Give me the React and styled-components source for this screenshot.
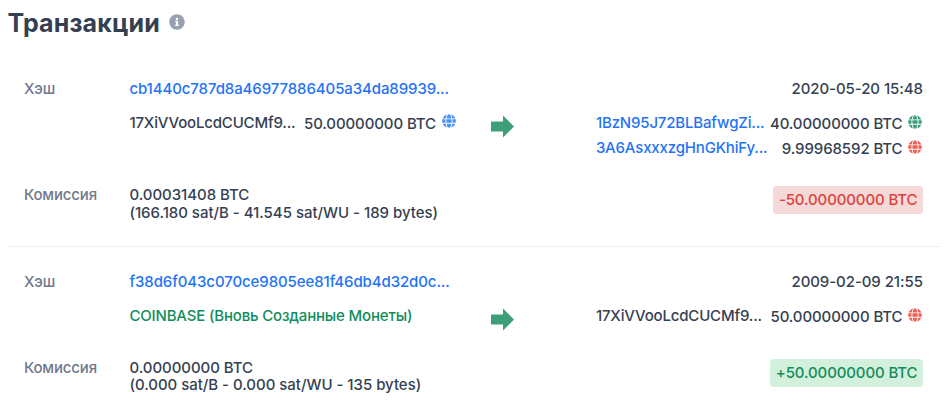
import React from 'react';
import styled, { createGlobalStyle } from 'styled-components';
import { FaGlobe, FaInfoCircle } from 'react-icons/fa';

const GlobalStyle = createGlobalStyle`
  * { box-sizing: border-box; }
  body {
    margin: 0;
    background: #fff;
    color: #353f52;
    font: 500 15px/18px Inter, sans-serif;
  }
`;

const tones = { blue: '#1f74f5', globe: '#4a91f7', green: '#118d5b', leaf: '#3c9f79', red: '#ec6055', dark: '#353f52' };

const Page = styled.main`
  width: 945px;
  height: 418px;
  padding: 8px 5px 0 7.5px;
  overflow: hidden;
`;

const Header = styled.header`
  display: flex;
  align-items: center;
  gap: 9px;
  height: 29px;
`;

const Title = styled.h1`
  margin: 0;
  width: 152px;
  padding-top: 1px;
  font-size: 25px;
  line-height: 30px;
  font-weight: 700;
  letter-spacing: 0.15px;
`;

const InfoIcon = styled(FaInfoCircle)`
  width: 16px;
  height: 16px;
  margin-bottom: 1px;
  color: #98a1b2;
`;

const Transaction = styled.article`
  display: grid;
  grid-template-columns: 105.5px 362px 104.5px 327px;
  grid-template-rows: 18px auto auto;
  align-content: start;
  padding: ${(p) => p.$top}px 16px 0 16.4px;
  height: ${(p) => p.$height}px;
  border-bottom: 1px solid ${(p) => (p.$last ? 'transparent' : '#edeff7')};
`;

const Label = styled.span`
  color: #6f798b;
  font-weight: 450;
  letter-spacing: -0.15px;
`;

const Text = styled.span`
  color: ${(p) => tones[p.$tone || 'dark']};
  white-space: nowrap;
  letter-spacing: ${(p) => p.$spacing || 0}px;
`;

const DateText = styled(Text)`
  grid-column: 3 / 5;
  text-align: right;
  letter-spacing: -0.07px;
`;

const Transfers = styled.div`
  display: flex;
  flex-direction: column;
  gap: 7px;
  margin-top: 16px;
  grid-column: ${(p) => p.$column};
`;

const Transfer = styled.div`
  display: flex;
  justify-content: space-between;
  height: 18px;
  width: 326.6px;
`;

const Amount = styled.span`
  display: flex;
  gap: 6px;
  padding-top: 1px;
  white-space: nowrap;
`;

const Globe = styled(FaGlobe)`
  width: 14px;
  height: 14px;
  margin-top: ${(p) => (p.$tone === 'globe' ? -1 : -0.5)}px;
  color: ${(p) => tones[p.$tone]};
`;

const Arrow = styled.svg`
  display: block;
  width: 23px;
  height: 23px;
  margin-top: 17px;
  fill: #3c9f79;
`;

const Fee = styled.div`
  display: grid;
  grid-template-columns: 105.5px 1fr auto;
  grid-column: 1 / 5;
  margin-top: ${(p) => p.$top}px;
`;

const FeeLines = styled.div`
  display: flex;
  flex-direction: column;
  line-height: 17.6px;
`;

const Badge = styled.span`
  height: 28px;
  padding: 0 5.5px;
  border-radius: 4px;
  line-height: 28px;
  letter-spacing: -0.12px;
  color: ${(p) => (p.$positive ? '#118d5b' : '#dc433b')};
  background: ${(p) => (p.$positive ? '#d3f0dd' : '#f5d8d8')};
`;

function TransferRow({ address, amount, tone, globe }) {
  return (
    <Transfer>
      <Text $tone={tone} $spacing={-0.17}>{address}</Text>
      {amount && (
        <Amount>
          <Text $spacing={-0.1}>{amount} BTC</Text>
          <Globe $tone={globe} />
        </Amount>
      )}
    </Transfer>
  );
}

const transactions = [
  {
    top: 43, height: 210, hash: 'cb1440c787d8a46977886405a34da89939...', date: '2020-05-20 15:48',
    input: { address: '17XiVVooLcdCUCMf9...', amount: '50.00000000', globe: 'globe' },
    outputs: [
      { address: '1BzN95J72BLBafwgZi...', amount: '40.00000000', tone: 'blue', globe: 'leaf' },
      { address: '3A6AsxxxzgHnGKhiFy...', amount: '9.99968592', tone: 'blue', globe: 'red' },
    ],
    feeTop: 29, fee: '0.00031408 BTC', rate: '(166.180 sat/B - 41.545 sat/WU - 189 bytes)',
    change: '-50.00000000 BTC',
  },
  {
    top: 26, height: 170, last: true, hash: 'f38d6f043c070ce9805ee81f46db4d32d0c...', date: '2009-02-09 21:55',
    input: { address: 'COINBASE (Вновь Созданные Монеты)', tone: 'green' },
    outputs: [{ address: '17XiVVooLcdCUCMf9...', amount: '50.00000000', globe: 'red' }],
    feeTop: 27.5, fee: '0.00000000 BTC', rate: '(0.000 sat/B - 0.000 sat/WU - 135 bytes)',
    change: '+50.00000000 BTC', positive: true,
  },
];

export default function App() {
  return (
    <Page>
      <GlobalStyle />
      <Header>
        <Title>Транзакции</Title>
        <InfoIcon />
      </Header>
      {transactions.map((tx) => (
        <Transaction key={tx.hash} $top={tx.top} $height={tx.height} $last={tx.last}>
          <Label>Хэш</Label>
          <Text $tone="blue" $spacing={-0.1}>{tx.hash}</Text>
          <DateText>{tx.date}</DateText>
          <Transfers $column={2}>
            <TransferRow {...tx.input} />
          </Transfers>
          <Arrow viewBox="0 0 23 23">
            <path d="M0 6.5H12V0.5L23 11.5L12 22.5V16.5H0Z" />
          </Arrow>
          <Transfers $column={4}>
            {tx.outputs.map((output) => (
              <TransferRow key={output.address} {...output} />
            ))}
          </Transfers>
          <Fee $top={tx.feeTop}>
            <Label>Комиссия</Label>
            <FeeLines>
              <Text $spacing={-0.04}>{tx.fee}</Text>
              <Text $spacing={-0.03}>{tx.rate}</Text>
            </FeeLines>
            <Badge $positive={tx.positive}>{tx.change}</Badge>
          </Fee>
        </Transaction>
      ))}
    </Page>
  );
}
